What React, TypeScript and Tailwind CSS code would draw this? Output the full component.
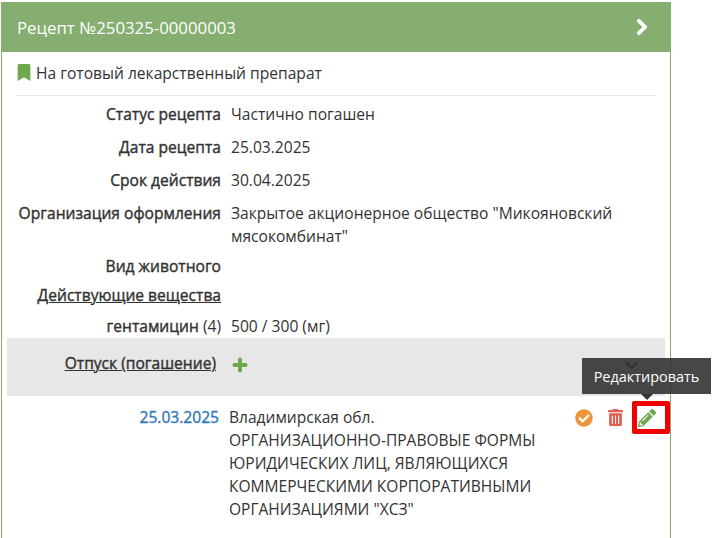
import { FaBookmark, FaChevronRight, FaPlus, FaCheckCircle, FaTrashAlt, FaPencilAlt, FaChevronDown } from "react-icons/fa";

function Row({ label, children, className = "" }: { label: React.ReactNode; children?: React.ReactNode; className?: string }) {
  return (
    <div className={`flex ${className}`}>
      <div className="w-[204px] shrink-0 text-right [-webkit-text-stroke:0.4px_#333]">{label}</div>
      <div className="ml-[10px] flex-1">{children}</div>
    </div>
  );
}

export default function App() {
  return (
    <div className="relative h-[538px] w-[715px] overflow-hidden bg-white pt-[2px] pl-[1px] text-[15.6px] leading-[23px] text-[#333] [font-family:'Open_Sans',sans-serif]">
      <div className="h-[536px] w-[670px] border-x border-[#85ae70]">
        <div className="-mx-px flex h-[50px] items-center justify-between bg-[#85ae70] pr-[20px] pl-[16px] text-[16.8px] text-white">
          <span>Рецепт №250325-00000003</span>
          <FaChevronRight className="text-[18px]" stroke="currentColor" strokeWidth={30} />
        </div>
        <div className="pt-[10px] pr-[14px] pl-[15px]">
          <div className="flex h-[34px] items-start border-b border-[#e5e5e5] pt-0">
            <FaBookmark className="mt-[2px] mr-[5px] h-[17px] w-[14px] text-[#6fa84f]" />
            <span>На готовый лекарственный препарат</span>
          </div>
          <div className="flex flex-col pt-[7px]">
            <Row label="Статус рецепта" className="mb-[10px]">Частично погашен</Row>
            <Row label="Дата рецепта" className="mb-[10px]">25.03.2025</Row>
            <Row label="Срок действия" className="mb-[10px]">30.04.2025</Row>
            <Row label="Организация оформления" className="mb-[7px]">
              Закрытое акционерное общество "Микояновский мясокомбинат"
            </Row>
            <Row label="Вид животного" className="mb-[6px]" />
            <Row label={<span className="underline">Действующие вещества</span>} className="mb-[8px]" />
            <Row label={<>гентамицин <span className="[-webkit-text-stroke:0px]">(4)</span></>}>500 / 300 (мг)</Row>
          </div>
        </div>
        <div className="mx-[5px] flex h-[58px] bg-[#e7e7e7] pt-[14px] pr-[26px]">
          <div className="w-[209px] shrink-0 text-right underline [-webkit-text-stroke:0.4px_#333]">Отпуск (погашение)</div>
          <FaPlus className="mt-[5px] ml-[16px] h-[16px] w-[16px] text-[#6fa84f]" stroke="currentColor" strokeWidth={30} />
          <FaChevronDown className="mt-[6px] ml-auto h-[15px] w-[15px] text-[#333]" />
        </div>
        <div className="flex pt-[10px]">
          <div className="w-[217px] shrink-0 text-right text-[#337ab7] [-webkit-text-stroke:0.4px_#337ab7]">25.03.2025</div>
          <div className="ml-[10px] w-[330px] shrink-0 text-[15.55px]">
            Владимирская обл.
            <br />
            ОРГАНИЗАЦИОННО-ПРАВОВЫЕ ФОРМЫ ЮРИДИЧЕСКИХ ЛИЦ, ЯВЛЯЮЩИХСЯ КОММЕРЧЕСКИМИ КОРПОРАТИВНЫМИ ОРГАНИЗАЦИЯМИ "ХСЗ"
          </div>
          <div className="ml-[16px] flex h-[23px] items-center">
            <FaCheckCircle className="h-[18px] w-[18px] text-[#f0943a]" />
            <FaTrashAlt className="ml-[15px] h-[17px] w-[15px] text-[#df5f50]" />
            <FaPencilAlt className="ml-[15px] h-[18px] w-[18px] text-[#6fa84f]" />
          </div>
        </div>
      </div>
      <div className="absolute top-[401px] left-[632px] h-[33px] w-[38px] rounded-[2px] border-[5px] border-[#f00000]" />
      <div className="absolute top-[358px] left-[582px] flex h-[36px] w-[129px] items-center justify-center bg-[#333]/90 text-[14.45px] text-white">
        Редактировать
      </div>
      <div className="absolute top-[394px] left-[641px] h-0 w-0 border-x-[6px] border-t-[6px] border-x-transparent border-t-[#333]" />
    </div>
  );
}
